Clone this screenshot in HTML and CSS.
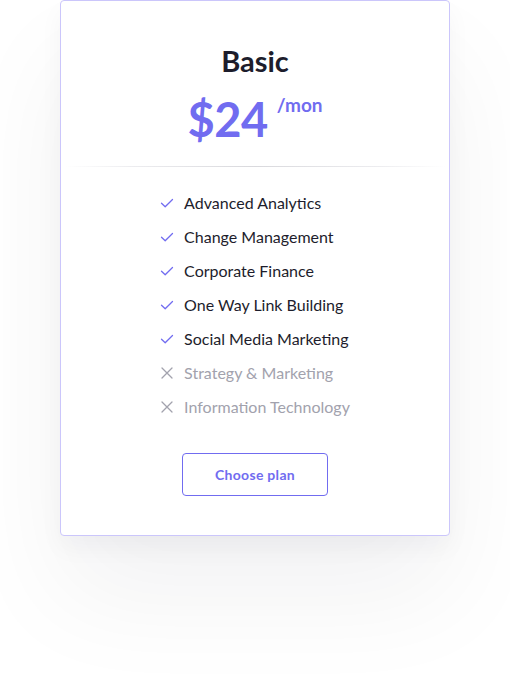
FILE: index.html
```html
<!DOCTYPE html>
<html>
<head>
<meta charset="utf-8">
<link rel="stylesheet" href="styles.css">
</head>
<body>
<div class="page">
  <div class="card">
    <h2 class="title">Basic</h2>
    <div class="price"><span class="amount">$24</span><span class="per">/mon</span></div>
    <div class="divider"></div>
    <ul class="features">
      <li class="on"><svg class="ic" viewBox="0 0 14 14"><path d="M1.5 7.2 L5.2 10.8 L12.5 3.5"/></svg><span>Advanced Analytics</span></li>
      <li class="on"><svg class="ic" viewBox="0 0 14 14"><path d="M1.5 7.2 L5.2 10.8 L12.5 3.5"/></svg><span>Change Management</span></li>
      <li class="on"><svg class="ic" viewBox="0 0 14 14"><path d="M1.5 7.2 L5.2 10.8 L12.5 3.5"/></svg><span>Corporate Finance</span></li>
      <li class="on"><svg class="ic" viewBox="0 0 14 14"><path d="M1.5 7.2 L5.2 10.8 L12.5 3.5"/></svg><span>One Way Link Building</span></li>
      <li class="on"><svg class="ic" viewBox="0 0 14 14"><path d="M1.5 7.2 L5.2 10.8 L12.5 3.5"/></svg><span>Social Media Marketing</span></li>
      <li class="off"><svg class="ic" viewBox="0 0 14 14"><path d="M2 2 L12 12 M12 2 L2 12"/></svg><span>Strategy &amp; Marketing</span></li>
      <li class="off"><svg class="ic" viewBox="0 0 14 14"><path d="M2 2 L12 12 M12 2 L2 12"/></svg><span>Information Technology</span></li>
    </ul>
    <div class="actions"><button class="btn">Choose plan</button></div>
  </div>
</div>
</body>
</html>
```

FILE: styles.css
```css
html, body {
  margin: 0;
  padding: 0;
  background: #ffffff;
}
body {
  font-family: Lato, "Noto Sans", sans-serif;
  width: 510px;
  height: 676px;
  overflow: hidden;
}
.page {
  padding: 0 60px;
}
.card {
  width: 388px;
  background: #fff;
  border: 1px solid #cbc6fb;
  border-radius: 4px;
  box-shadow: 0 60px 110px rgba(20, 20, 40, 0.055), 0 12px 24px rgba(20, 20, 40, 0.04);
  padding: 42px 0 39px;
  text-align: center;
}
.title {
  margin: 0;
  font-size: 29px;
  font-weight: 700;
  line-height: 36px;
  color: #1d1d2c;
}
.price {
  display: flex;
  justify-content: center;
  align-items: flex-start;
  margin-top: 12px;
  gap: 9px;
}
.amount {
  font-size: 47px;
  font-weight: 700;
  line-height: 56px;
  color: #716cf0;
  letter-spacing: -0.5px;
}
.per {
  font-size: 19px;
  font-weight: 700;
  line-height: 22px;
  color: #716cf0;
  margin-top: 3px;
}
.divider {
  height: 1px;
  margin: 19px 4px 0;
  background: linear-gradient(90deg, rgba(220,220,225,0) 0%, #ececef 18%, #d9d9dd 50%, #ececef 82%, rgba(220,220,225,0) 100%);
}
.features {
  list-style: none;
  margin: 26px auto 0;
  padding: 0;
  display: inline-flex;
  flex-direction: column;
  gap: 14px;
  text-align: left;
}
.features li {
  display: flex;
  align-items: center;
  gap: 10px;
  font-size: 16px;
  line-height: 20px;
  color: #1d1d2c;
}
.features li.off {
  color: #a2a2ad;
}
.ic {
  width: 14px;
  height: 14px;
  fill: none;
  stroke-width: 1.3;
  stroke-linecap: round;
  stroke-linejoin: round;
}
.on .ic { stroke: #716cf0; }
.off .ic { stroke: #a2a2ad; }
.actions {
  margin-top: 36px;
}
.btn {
  width: 146px;
  height: 43px;
  background: #fff;
  border: 1px solid #716cf0;
  border-radius: 4px;
  font-family: Lato, sans-serif;
  font-size: 14px;
  font-weight: 700;
  letter-spacing: 0.3px;
  color: #716cf0;
  cursor: pointer;
}
```
